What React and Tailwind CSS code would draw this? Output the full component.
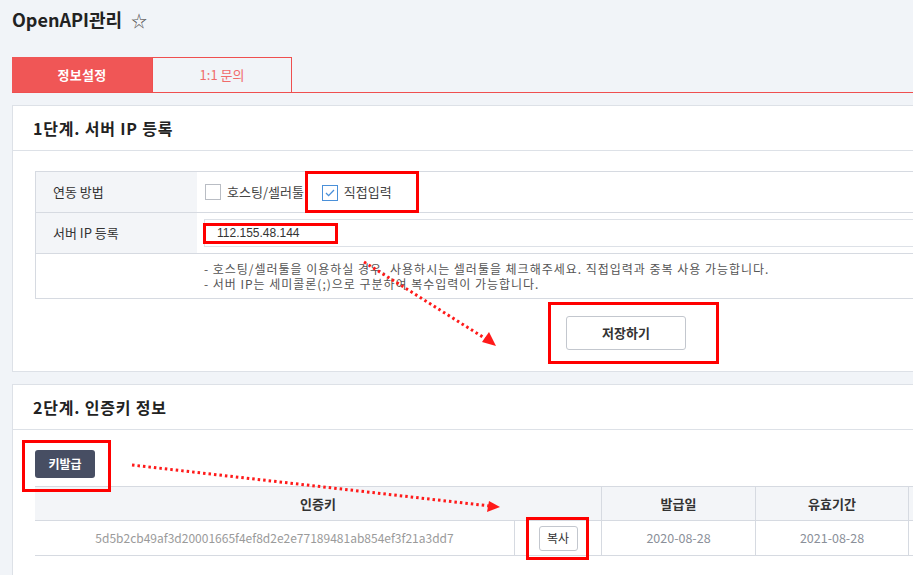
import React from 'react'

const font = { fontFamily: '"Noto Sans CJK KR", "Noto Sans", sans-serif' }

function Check({ checked }) {
  return (
    <span className={`inline-flex w-[16px] h-[16px] items-center justify-center border bg-white ${checked ? 'border-[#4a90d9]' : 'border-[#b9bdc4]'}`}>
      {checked && (
        <svg width="10" height="8" viewBox="0 0 10 8" fill="none">
          <path d="M1 4l2.6 2.6L9 1" stroke="#4a90d9" strokeWidth="1.3" />
        </svg>
      )}
    </span>
  )
}

function Annotations() {
  return (
    <svg className="absolute left-0 top-0 pointer-events-none" width="913" height="575">
      <g fill="none" stroke="#ff0000" strokeWidth="3">
        <rect x="306.5" y="172.5" width="111" height="39" />
        <rect x="204.5" y="224.5" width="132" height="18" />
        <rect x="549.5" y="303.5" width="168" height="59" />
        <rect x="23.5" y="441.5" width="86" height="49" />
        <rect x="527.5" y="518.5" width="60" height="40" />
      </g>
      <g stroke="#ff1a1a" strokeWidth="3" strokeDasharray="2.5 3">
        <line x1="364" y1="262" x2="486" y2="339" />
        <line x1="132" y1="465" x2="490" y2="506" />
      </g>
      <polygon points="496,346 482,342 489,332" fill="#ff1a1a" />
      <polygon points="500,507 487,512 489,501" fill="#ff1a1a" />
    </svg>
  )
}

export default function App() {
  return (
    <div className="relative w-[913px] h-[575px] overflow-hidden bg-[#f1f4f8] text-[#333]" style={font}>
      <div className="w-[960px] pl-[12px]">
        {/* Title */}
        <div className="flex items-center gap-[9px] h-[38px] pt-[1px]">
          <h1 className="text-[18px] font-bold text-[#222]">OpenAPI관리</h1>
          <span className="text-[16px] text-[#555] leading-none">☆</span>
        </div>

        {/* Tabs */}
        <div className="mt-[19px] flex border-b border-[#ef4f4f]">
          <div className="w-[140px] h-[35px] flex items-center justify-center bg-[#f05656] text-white text-[13px] font-bold tracking-[0.3px]">
            정보설정
          </div>
          <div className="w-[140px] h-[35px] flex items-center justify-center border border-b-0 border-[#ef4f4f] text-[#f06b6b] text-[13px]">
            1:1 문의
          </div>
        </div>

        {/* Step 1 */}
        <div className="mt-[12px] bg-white border border-[#dde1e7]">
          <div className="h-[45px] flex items-center pl-[20px] border-b border-[#dde1e7]">
            <h2 className="text-[16px] font-bold text-[#222] tracking-[0.8px]">1단계. 서버 IP 등록</h2>
          </div>
          <div className="pt-[20px] pl-[22px] pb-[21px]">
            <div className="border-t border-l border-[#d6dae1] text-[13px]">
              <div className="flex h-[41px] border-b border-[#d6dae1]">
                <div className="w-[161px] bg-[#f3f5f8] flex items-center pl-[17px]">연동 방법</div>
                <div className="flex-1 flex items-center pl-[8px] gap-[6px]">
                  <Check />
                  <span className="text-[#444]">호스팅/셀러툴</span>
                  <span className="ml-[12px]"><Check checked /></span>
                  <span className="text-[#444]">직접입력</span>
                </div>
              </div>
              <div className="flex h-[41px] border-b border-[#d6dae1]">
                <div className="w-[161px] bg-[#f3f5f8] flex items-center pl-[17px]">서버 IP 등록</div>
                <div className="flex-1 flex items-center pl-[7px]">
                  <div className="w-full h-[28px] border border-[#dde1e7] flex items-center pl-[12px] text-[12px] text-[#333]" style={{ fontFamily: '"Liberation Sans", sans-serif' }}>
                    112.155.48.144
                  </div>
                </div>
              </div>
              <div className="flex h-[45px] border-b border-[#d6dae1]">
                <div className="w-[161px] border-r border-white"></div>
                <div className="flex-1 flex flex-col justify-center pl-[7px] text-[12px] leading-[15px] tracking-[0.98px] text-[#555]">
                  <p>- 호스팅/셀러툴을 이용하실 경우, 사용하시는 셀러툴을 체크해주세요. 직접입력과 중복 사용 가능합니다.</p>
                  <p>- 서버 IP는 세미콜론(;)으로 구분하여 복수입력이 가능합니다.</p>
                </div>
              </div>
            </div>
            <div className="mt-[17px] pl-[531px]">
              <button className="w-[120px] h-[34px] border border-[#c3c7ce] rounded-[3px] bg-white text-[13px] font-bold text-[#333]">
                저장하기
              </button>
            </div>
          </div>
        </div>

        {/* Step 2 */}
        <div className="mt-[12px] bg-white border border-[#dde1e7] h-[200px]">
          <div className="h-[45px] flex items-center pl-[20px] border-b border-[#dde1e7]">
            <h2 className="text-[16px] font-bold text-[#222] tracking-[0.8px]">2단계. 인증키 정보</h2>
          </div>
          <div className="pt-[20px] pl-[22px]">
            <button className="w-[60px] h-[28px] rounded-[3px] bg-[#474e63] text-white text-[12px] font-bold">
              키발급
            </button>
            <div className="mt-[8px] text-[13px]">
              <div className="flex h-[35px] bg-[#f3f5f8] border-t border-b border-[#d6dae1]">
                <div className="w-[566px] flex items-center justify-center font-bold text-[#333]">인증키</div>
                <div className="w-[154px] flex items-center justify-center border-l border-[#d6dae1] font-bold">발급일</div>
                <div className="w-[153px] flex items-center justify-center border-l border-[#d6dae1] font-bold">유효기간</div>
                <div className="flex-1 border-l border-[#d6dae1]"></div>
              </div>
              <div className="flex h-[35px] border-b border-[#d6dae1] text-[12px]">
                <div className="w-[479px] flex items-center justify-center text-[#9a9a9a] text-[12px]">
                  5d5b2cb49af3d20001665f4ef8d2e2e77189481ab854ef3f21a3dd7
                </div>
                <div className="w-[87px] flex items-center justify-center border-l border-[#d6dae1]">
                  <button className="w-[39px] h-[25px] border border-[#c3c7ce] rounded-[3px] bg-white text-[12px] text-[#333]">
                    복사
                  </button>
                </div>
                <div className="w-[154px] flex items-center justify-center border-l border-[#d6dae1] text-[#8a8f99] text-[12.5px]">2020-08-28</div>
                <div className="w-[153px] flex items-center justify-center border-l border-[#d6dae1] text-[#8a8f99] text-[12.5px]">2021-08-28</div>
                <div className="flex-1 border-l border-[#d6dae1]"></div>
              </div>
            </div>
          </div>
        </div>
      </div>
      <Annotations />
    </div>
  )
}
